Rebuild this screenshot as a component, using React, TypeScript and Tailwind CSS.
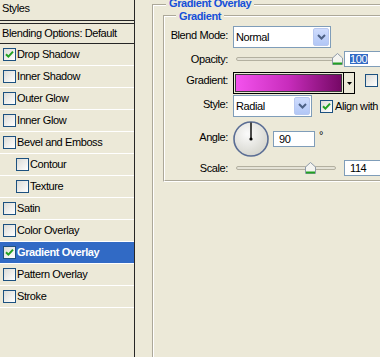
import React from "react";

function Check({ checked }: { checked?: boolean }) {
  return (
    <span className="w-[13px] h-[13px] shrink-0 border border-[#1c5180] bg-linear-to-br from-[#dcdcd7] to-white flex items-center justify-center">
      {checked && (
        <svg width="9" height="9" viewBox="0 0 9 9">
          <path d="M1 4.2 L3.4 6.6 L8 1.6" stroke="#21a121" strokeWidth="2" fill="none" />
        </svg>
      )}
    </span>
  );
}

function Chevron() {
  return (
    <svg width="9" height="6" viewBox="0 0 9 6">
      <path d="M1 1 L4.5 4.5 L8 1" stroke="#4d6185" strokeWidth="2" fill="none" />
    </svg>
  );
}

function Select({ w, text }: { w: string; text: string }) {
  return (
    <div className={`${w} h-[22px] border border-[#7f9db9] bg-white flex items-center`}>
      <span className="flex-1 pl-[2px]">{text}</span>
      <span className="w-[16px] h-[18px] mr-[1px] rounded-[2px] border border-[#b8c8f0] bg-linear-to-b from-[#cfdcfd] to-[#b2c7f6] flex items-center justify-center">
        <Chevron />
      </span>
    </div>
  );
}

function Thumb() {
  return (
    <svg width="11" height="12" viewBox="0 0 11 12">
      <path d="M0.5 5 L5.5 0.5 L10.5 5 L10.5 11.5 L0.5 11.5 Z" fill="#f4f4f0" stroke="#8e9aa8" strokeWidth="1" />
      <path d="M1 10.5 L10 10.5" stroke="#21a121" strokeWidth="2" />
    </svg>
  );
}

function Slider({ pos }: { pos: number }) {
  return (
    <div className="relative ml-[3px] w-[100px] h-[12px] flex items-center">
      <div className="w-full h-[4px] rounded-[2px] border border-[#b3b0a0] bg-[#e4e2d6]" />
      <div className="absolute top-0 flex" style={{ left: pos }}>
        <Thumb />
      </div>
    </div>
  );
}

function Field({ w, children }: { w: string; children: React.ReactNode }) {
  return (
    <div className={`${w} h-[16px] border border-[#7f9db9] bg-white flex items-center pl-[5px] leading-[12px]`}>
      {children}
    </div>
  );
}

const items: { label: string; checked?: boolean; indent?: boolean; active?: boolean }[] = [
  { label: "Drop Shadow", checked: true },
  { label: "Inner Shadow" },
  { label: "Outer Glow" },
  { label: "Inner Glow" },
  { label: "Bevel and Emboss" },
  { label: "Contour", indent: true },
  { label: "Texture", indent: true },
  { label: "Satin" },
  { label: "Color Overlay" },
  { label: "Gradient Overlay", checked: true, active: true },
  { label: "Pattern Overlay" },
  { label: "Stroke" },
];

export default function App() {
  return (
    <div className="w-[380px] h-[357px] overflow-hidden flex bg-[#ece9d8] text-black text-[11px] leading-[13px] tracking-[-0.4px] font-['Liberation_Sans',Arial,sans-serif]">
      {/* Left list */}
      <div className="w-[135px] shrink-0 border-r border-[#262626] flex flex-col">
        <div className="h-[21px] border-b border-[#262626] pl-[2px] pt-[2px]">Styles</div>
        <div className="mt-[2px] h-[21px] border-t border-b border-[#262626] pl-[2px] flex items-center">
          Blending Options: Default
        </div>
        {items.map((it) => (
          <div
            key={it.label}
            className={`h-[22px] border-b border-white flex items-center gap-[1px] ${
              it.indent ? "pl-[16px]" : "pl-[3px]"
            } ${it.active ? "bg-[#316ac5] text-white font-bold" : ""}`}
          >
            <Check checked={it.checked} />
            <span>{it.label}</span>
          </div>
        ))}
      </div>

      {/* Right area */}
      <div className="flex-1 pl-[17px] pt-[4px]">
        <div className="relative w-[300px] h-[400px] border-l border-t border-[#aca899]">
          <div className="absolute top-[-8px] left-[13px] px-[3px] bg-[#ece9d8] font-bold text-[#1550d8] whitespace-nowrap">
            Gradient Overlay
          </div>
          <div className="h-full border-l border-t border-white pl-[9px] pt-[9px]">
            <div className="relative w-[280px] border-l border-t border-b border-[#aca899] border-b-white">
              <div className="absolute top-[-6px] left-[12px] px-[3px] bg-[#ece9d8] font-bold text-[#1550d8] whitespace-nowrap">
                Gradient
              </div>
              <div className="border-l border-t border-b border-white border-b-[#aca899] pl-[1px] pb-[3px] flex flex-col">
                {/* Blend mode */}
                <div className="mt-[9px] h-[22px] flex items-center">
                  <span className="w-[62px] text-right pb-[4px]">Blend Mode:</span>
                  <div className="ml-[5px]">
                    <Select w="w-[98px]" text="Normal" />
                  </div>
                </div>
                {/* Opacity */}
                <div className="h-[22px] flex items-center">
                  <span className="w-[62px] text-right">Opacity:</span>
                  <div className="ml-[5px] flex items-center">
                    <Slider pos={96} />
                    <div className="ml-[8px]">
                      <Field w="w-[60px]">
                        <span className="bg-[#316ac5] text-white leading-[10px] pr-[1px]">100</span>
                      </Field>
                    </div>
                  </div>
                </div>
                {/* Gradient */}
                <div className="mt-[2px] h-[22px] flex items-center">
                  <span className="w-[62px] text-right pb-[6px]">Gradient:</span>
                  <div className="ml-[5px] w-[122px] h-[22px] border border-black bg-[#ece9d8] flex">
                    <div className="flex-1 m-[1px] border border-[#3a3a3a] bg-linear-to-r from-[#f452ee] via-[#c82cbc] to-[#760866]" />
                    <div className="w-[11px] border-l border-black flex items-center justify-center">
                      <svg width="5" height="3" viewBox="0 0 5 3">
                        <path d="M0 0 L5 0 L2.5 3 Z" fill="#000" />
                      </svg>
                    </div>
                  </div>
                  <div className="ml-[10px] self-start mt-[2px] flex items-center gap-[2px] whitespace-nowrap">
                    <Check />
                    <span>Reverse</span>
                  </div>
                </div>
                {/* Style */}
                <div className="mt-[1px] h-[22px] flex items-center">
                  <span className="w-[62px] text-right pb-[4px]">Style:</span>
                  <div className="ml-[5px]">
                    <Select w="w-[79px]" text="Radial" />
                  </div>
                  <div className="ml-[8px] flex items-center gap-[2px] whitespace-nowrap">
                    <Check checked />
                    <span>Align with Layer</span>
                  </div>
                </div>
                {/* Angle */}
                <div className="mt-[4px] h-[36px] flex items-center">
                  <span className="w-[62px] text-right pb-[4px]">Angle:</span>
                  <div className="ml-[5px] flex">
                    <svg width="36" height="36" viewBox="0 0 36 36">
                      <defs>
                        <radialGradient id="dialg" cx="40%" cy="35%" r="70%">
                          <stop offset="0" stopColor="#fbfbfb" />
                          <stop offset="1" stopColor="#d4d4cc" />
                        </radialGradient>
                      </defs>
                      <circle cx="18" cy="18" r="17" fill="url(#dialg)" stroke="#5a6d94" strokeWidth="1.6" />
                      <line x1="18" y1="18" x2="18" y2="1.5" stroke="#000" strokeWidth="1.4" />
                      <circle cx="18" cy="18" r="1.6" fill="#000" />
                    </svg>
                  </div>
                  <div className="ml-[4px]">
                    <Field w="w-[42px]">90</Field>
                  </div>
                  <span className="ml-[4px] self-start mt-[8px]">°</span>
                </div>
                {/* Scale */}
                <div className="mt-[2px] h-[18px] flex items-center">
                  <span className="w-[62px] text-right">Scale:</span>
                  <div className="ml-[5px] flex items-center">
                    <Slider pos={69} />
                    <div className="ml-[8px]">
                      <Field w="w-[60px]">114</Field>
                    </div>
                  </div>
                </div>
              </div>
            </div>
          </div>
        </div>
      </div>
    </div>
  );
}
